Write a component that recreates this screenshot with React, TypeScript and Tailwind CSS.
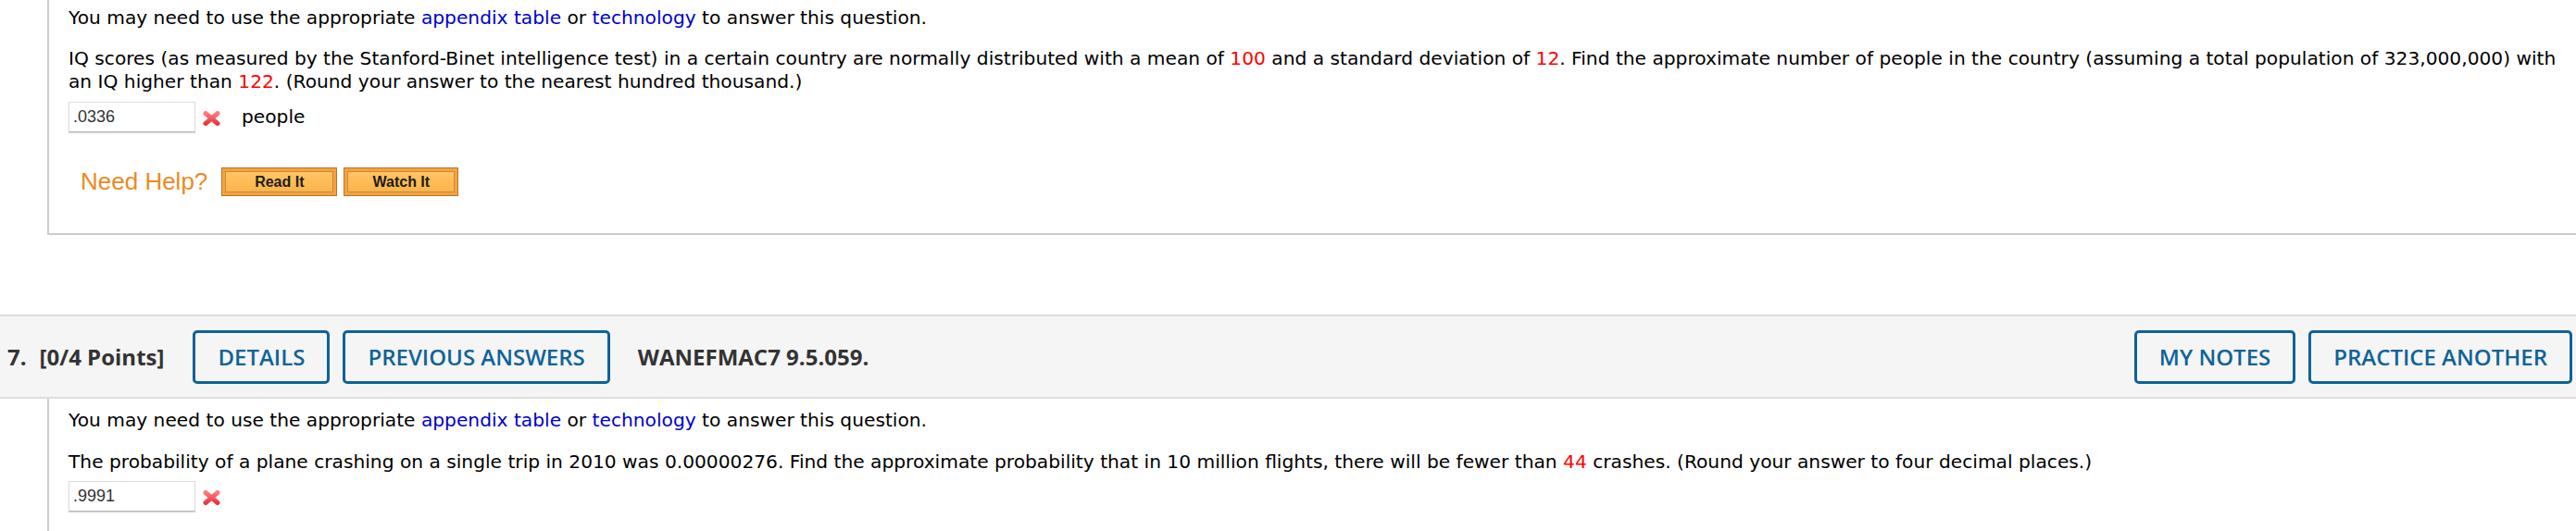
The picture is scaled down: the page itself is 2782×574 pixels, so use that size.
import React from 'react';

const WrongMark = () => (
    <svg width="21" height="18" viewBox="0 0 21 18" className="shrink-0">
        <defs>
            <linearGradient id="xg" x1="0" y1="0" x2="0" y2="1">
                <stop offset="0" stopColor="#ff7b7e" />
                <stop offset="1" stopColor="#e8383e" />
            </linearGradient>
        </defs>
        <path d="M4 3.5 L17 14.5 M17 3.5 L4 14.5" stroke="url(#xg)" strokeWidth="5" strokeLinecap="round" fill="none" />
    </svg>
);

const AnswerBox = ({ value }: { value: string }) => (
    <div className="w-[137px] h-[33px] border border-[#dcdcdc] border-b-[#b8b8b8] shadow-[0_1px_1px_rgba(0,0,0,0.15)] bg-white flex items-center pl-[4px] font-['Liberation_Sans',Arial,sans-serif] text-[18px] text-[#333]">
        {value}
    </div>
);

const HelpButton = ({ label, width }: { label: string; width: string }) => (
    <div className={`${width} h-[31px] border border-[#b3772f] bg-[#f7a13c] p-[3px]`}>
        <div className="h-full border border-[#c68a44] bg-gradient-to-b from-[#ffc563] to-[#fcb34a] flex items-center justify-center font-['Liberation_Sans',Arial,sans-serif] font-bold text-[16px] text-[#1c1c1c]">
            {label}
        </div>
    </div>
);

const OutlineButton = ({ label }: { label: string }) => (
    <div className="h-[58px] px-[24px] border-[3px] border-[#0e6398] rounded-[5px] flex items-center text-[24px] font-semibold text-[#0e6398] whitespace-nowrap">
        {label}
    </div>
);

const Link = ({ children }: { children: React.ReactNode }) => (
    <span className="text-[#0000cc]">{children}</span>
);

const Red = ({ children }: { children: React.ReactNode }) => (
    <span className="text-[#ff0000]">{children}</span>
);

export default function App() {
    return (
        <div className="w-[2782px] h-[574px] overflow-hidden bg-white font-['DejaVu_Sans',Verdana,sans-serif] text-[20.2px] leading-[25px] text-black">
            {/* question 6, tail end */}
            <div className="ml-[51px] border-l-2 border-b-2 border-[#cccccc] pl-[21px] pt-[7px] pb-[40px]">
                <p>
                    You may need to use the appropriate <Link>appendix table</Link> or <Link>technology</Link> to answer this question.
                </p>
                <p className="mt-[19px] whitespace-nowrap">
                    IQ scores (as measured by the Stanford-Binet intelligence test) in a certain country are normally distributed with a mean of <Red>100</Red> and a standard deviation of <Red>12</Red>. Find the approximate number of people in the country (assuming a total population of 323,000,000) with
                    <br />
                    an IQ higher than <Red>122</Red>. (Round your answer to the nearest hundred thousand.)
                </p>
                <div className="mt-[9px] flex items-center">
                    <AnswerBox value=".0336" />
                    <div className="ml-[7px] mt-[3px]">
                        <WrongMark />
                    </div>
                    <span className="ml-[22px]">people</span>
                </div>
                <div className="mt-[38px] flex items-center">
                    <span className="ml-[13px] font-['Liberation_Sans',Arial,sans-serif] text-[26px] text-[#ec8a22]">Need Help?</span>
                    <div className="ml-[15px] flex gap-[7px]">
                        <HelpButton label="Read It" width="w-[125px]" />
                        <HelpButton label="Watch It" width="w-[124px]" />
                    </div>
                </div>
            </div>

            {/* question 7 header */}
            <div className="mt-[86px] h-[91px] border-y-2 border-[#dddddd] bg-[#f5f5f5] flex items-center pl-[8px] pr-[4px] font-['Open_Sans',sans-serif]">
                <span className="text-[24px] font-bold text-[#333]">7.</span>
                <span className="ml-[14px] text-[24px] font-bold text-[#333]">[0/4 Points]</span>
                <div className="ml-[31px] flex gap-[14px]">
                    <OutlineButton label="DETAILS" />
                    <OutlineButton label="PREVIOUS ANSWERS" />
                </div>
                <span className="ml-[30px] text-[24px] font-bold text-[#333]">WANEFMAC7 9.5.059.</span>
                <div className="ml-auto flex gap-[14px]">
                    <OutlineButton label="MY NOTES" />
                    <OutlineButton label="PRACTICE ANOTHER" />
                </div>
            </div>

            {/* question 7 body */}
            <div className="ml-[51px] border-l-2 border-[#cccccc] pl-[21px] pt-[11px] pb-[60px]">
                <p>
                    You may need to use the appropriate <Link>appendix table</Link> or <Link>technology</Link> to answer this question.
                </p>
                <p className="mt-[20px]">
                    The probability of a plane crashing on a single trip in 2010 was 0.00000276. Find the approximate probability that in 10 million flights, there will be fewer than <Red>44</Red> crashes. (Round your answer to four decimal places.)
                </p>
                <div className="mt-[8px] flex items-center">
                    <AnswerBox value=".9991" />
                    <div className="ml-[7px] mt-[3px]">
                        <WrongMark />
                    </div>
                </div>
            </div>
        </div>
    );
}
